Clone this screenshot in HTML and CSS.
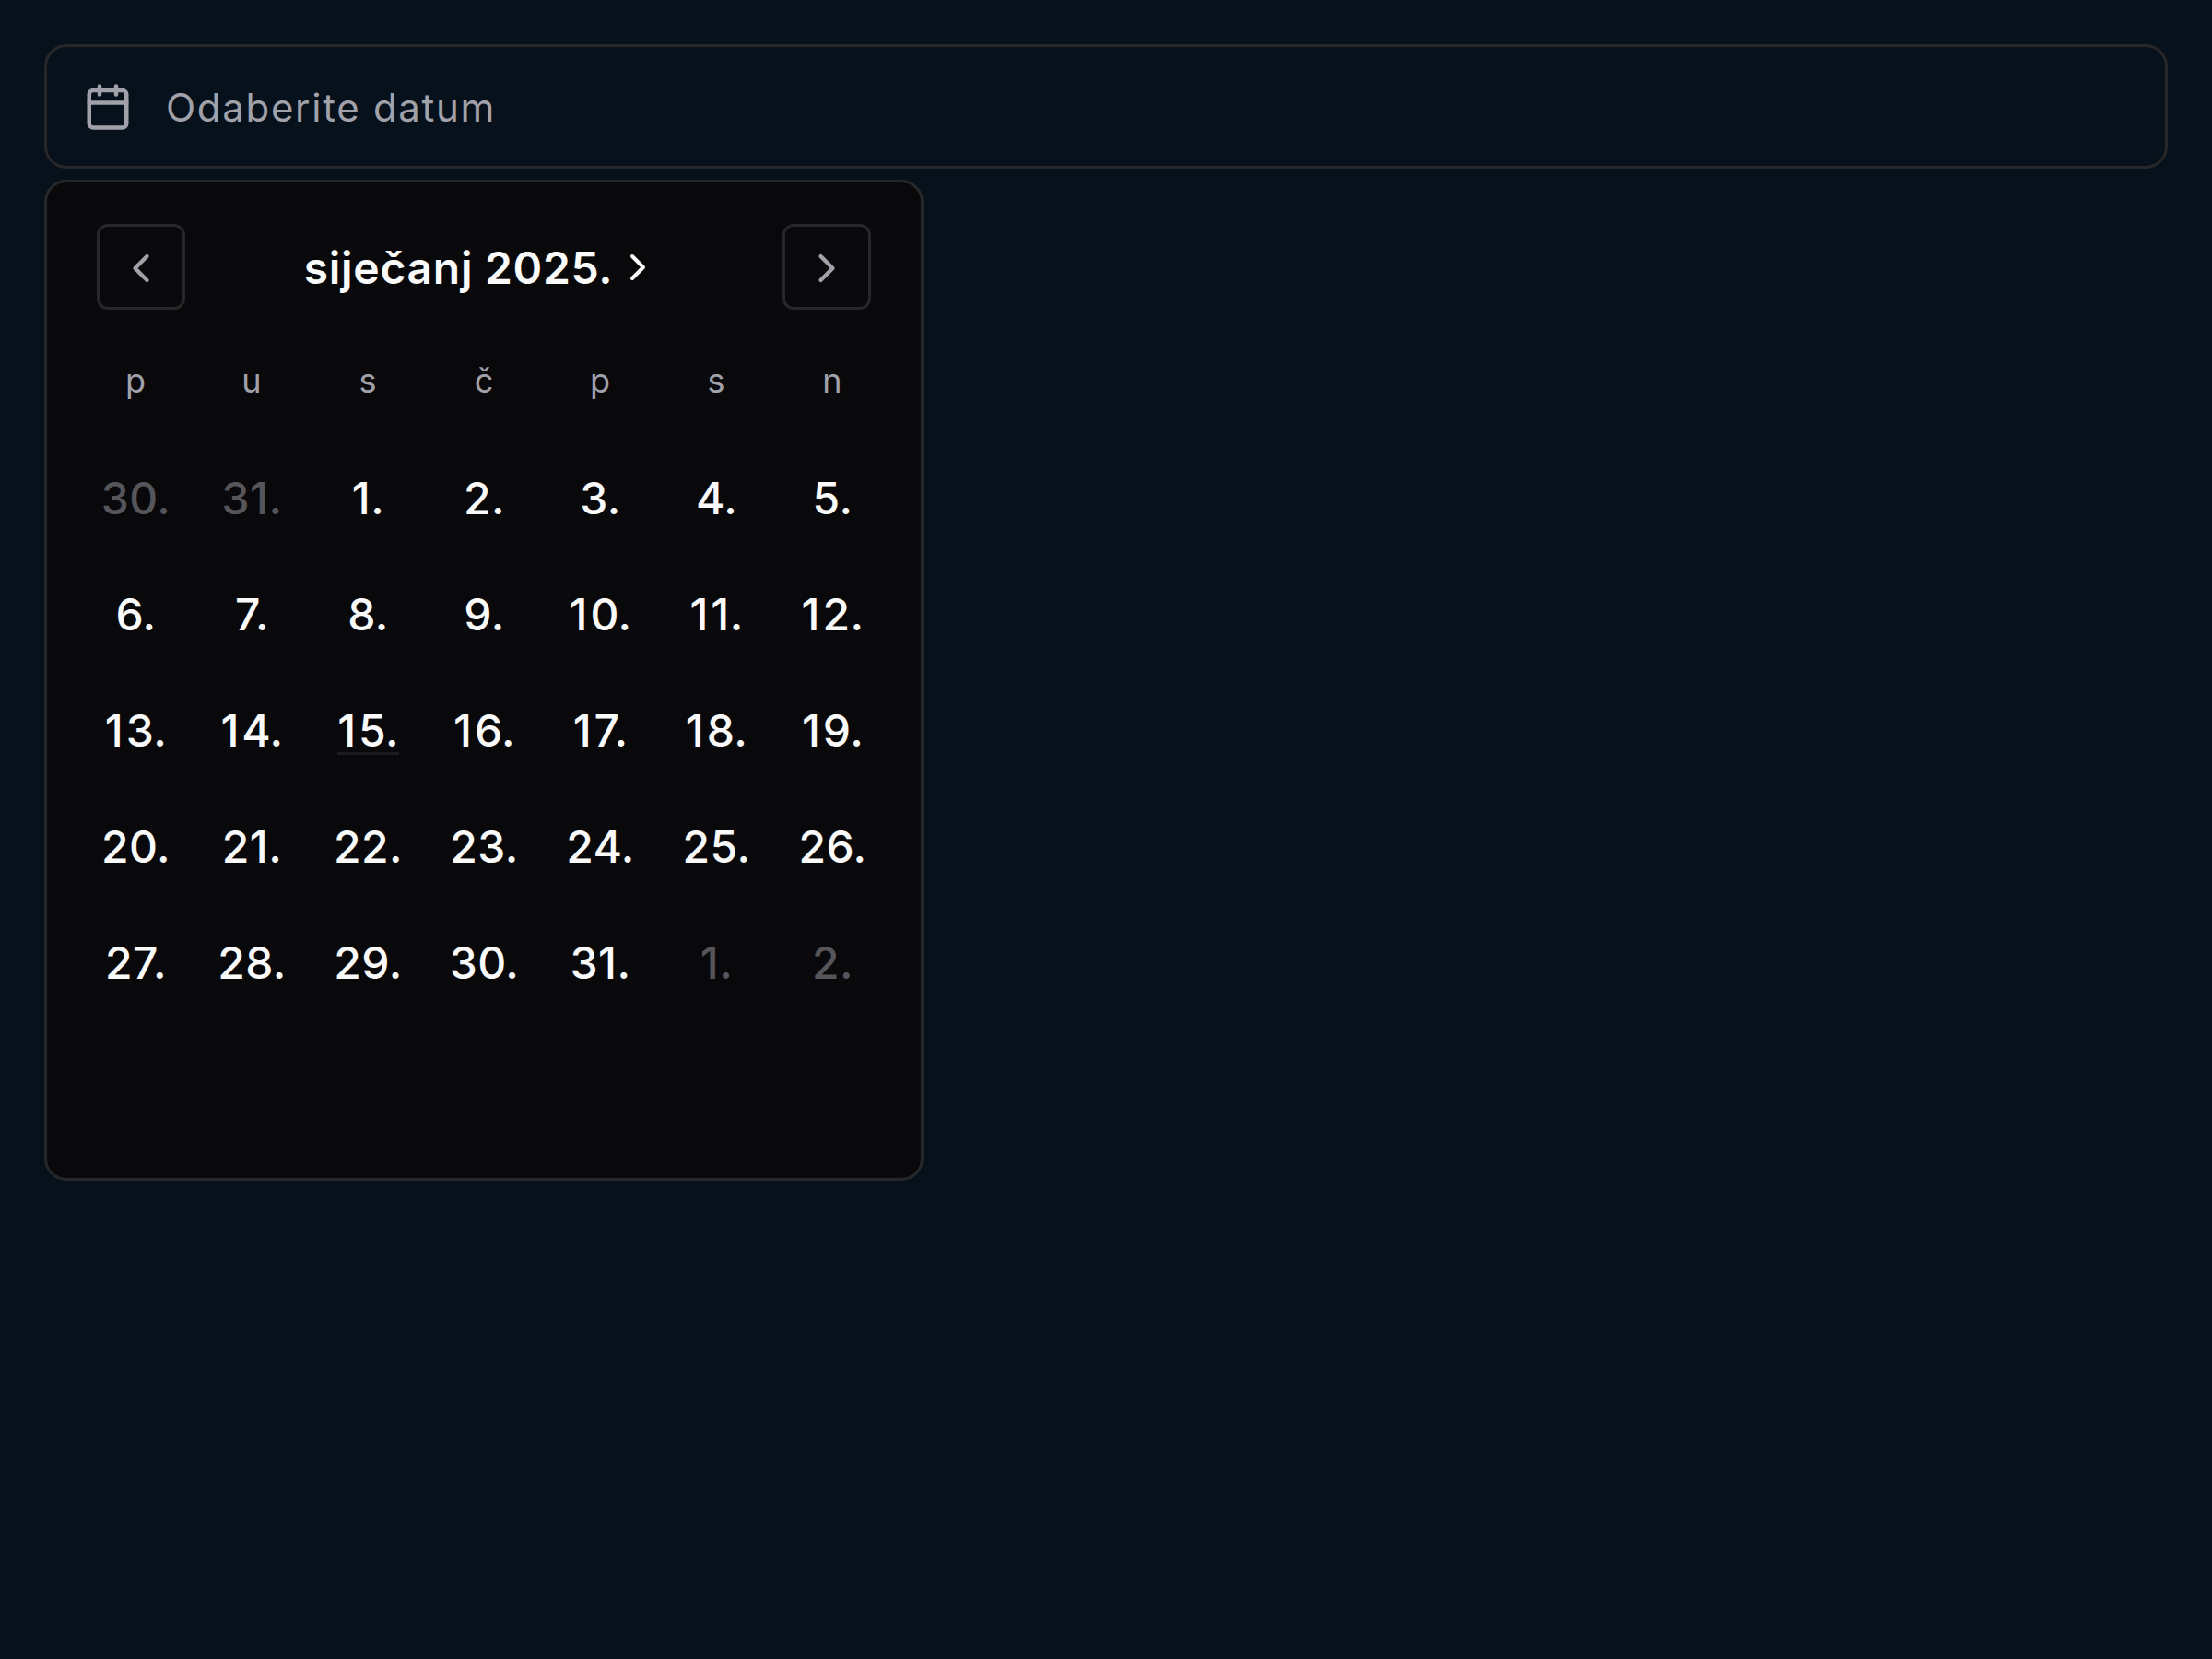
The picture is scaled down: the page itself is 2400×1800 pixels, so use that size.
FILE: index.html
```html
<!DOCTYPE html>
<html lang="hr">
<head>
<meta charset="utf-8">
<title>Odabir datuma</title>
<link rel="stylesheet" href="styles.css">
</head>
<body>
<main class="picker">
  <button class="field" type="button">
    <svg class="field-icon" viewBox="0 0 24 24"><path d="M8 2v4M16 2v4M3 10h18"/><rect x="3" y="4" width="18" height="18" rx="2"/></svg>
    <span class="field-text">Odaberite datum</span>
  </button>
  <section class="panel">
    <header class="header">
      <button class="nav" type="button" aria-label="Prethodni mjesec"><svg class="nav-icon" viewBox="0 0 24 24"><path d="m15 18-6-6 6-6"/></svg></button>
      <button class="title" type="button"><span class="title-text">siječanj 2025.</span><svg class="title-icon" viewBox="0 0 24 24"><path d="m9 18 6-6-6-6"/></svg></button>
      <button class="nav" type="button" aria-label="Sljedeći mjesec"><svg class="nav-icon" viewBox="0 0 24 24"><path d="m9 18 6-6-6-6"/></svg></button>
    </header>
    <div class="weekdays"><span>p</span><span>u</span><span>s</span><span>č</span><span>p</span><span>s</span><span>n</span></div>
    <div class="days">
      <span class="outside">30.</span><span class="outside">31.</span><span>1.</span><span>2.</span><span>3.</span><span>4.</span><span>5.</span>
      <span>6.</span><span>7.</span><span>8.</span><span>9.</span><span class="teen">10.</span><span class="teen">11.</span><span class="teen">12.</span>
      <span class="teen">13.</span><span class="teen">14.</span><span class="teen today">15.</span><span class="teen">16.</span><span class="teen">17.</span><span class="teen">18.</span><span class="teen">19.</span>
      <span>20.</span><span>21.</span><span>22.</span><span>23.</span><span>24.</span><span>25.</span><span>26.</span>
      <span>27.</span><span>28.</span><span>29.</span><span>30.</span><span>31.</span><span class="outside">1.</span><span class="outside">2.</span>
    </div>
  </section>
</main>
</body>
</html>
```
FILE: styles.css
```css
* { box-sizing: border-box; }
body {
  margin: 0;
  min-height: 100vh;
  background: #06111b;
  color: #fafafa;
  font-family: Inter, "Liberation Sans", sans-serif;
}
button {
  margin: 0;
  padding: 0;
  background: none;
  border: 0;
  color: inherit;
  font: inherit;
}
svg {
  flex: none;
  fill: none;
  stroke: currentColor;
  stroke-width: 2;
  stroke-linecap: round;
  stroke-linejoin: round;
}
.picker {
  display: flex;
  flex-direction: column;
  align-items: flex-start;
  gap: 12px;
  padding: 48px;
}
.field {
  display: flex;
  align-items: center;
  gap: 36px;
  width: 100%;
  height: 135px;
  padding: 0 39px;
  border: 3px solid #27272a;
  border-radius: 24px;
  color: #a1a1aa;
  font-size: 42px;
  letter-spacing: 1.7px;
  line-height: 60px;
}
.field-icon { width: 54px; height: 54px; }
.field-text { padding-top: 2px; }
.panel {
  width: 954px;
  height: 1086px;
  padding: 45px 33px;
  border: 3px solid #27272a;
  border-radius: 24px;
  background: #09090b;
}
.header {
  display: flex;
  justify-content: space-between;
  align-items: center;
  height: 93px;
  padding: 0 21px;
}
.nav {
  display: grid;
  place-items: center;
  width: 96px;
  height: 93px;
  padding-top: 3px;
  border: 3px solid #27272a;
  border-radius: 12px;
  color: #a1a1aa;
}
.nav-icon { width: 52px; height: 52px; }
.title {
  display: flex;
  align-items: center;
  gap: 3px;
  padding-right: 4px;
  font-size: 48px;
  font-weight: 600;
  letter-spacing: 0.7px;
  line-height: 72px;
}
.title-text { padding-top: 2px; }
.title-icon { width: 48px; height: 48px; }
.weekdays, .days {
  display: grid;
  grid-template-columns: repeat(7, 126px);
  text-align: center;
}
.weekdays {
  margin-top: 50px;
  color: #a1a1aa;
  font-size: 36px;
  line-height: 54px;
}
.days {
  grid-auto-rows: 126px;
  margin-top: 38px;
  font-size: 48px;
  font-weight: 500;
  letter-spacing: 0.4px;
  line-height: 126px;
}
.days span { padding-left: 1px; }
.outside { color: #55555a; }
.teen::first-letter { letter-spacing: 3px; }
.today {
  text-decoration: underline 3px #1c1a1c;
  text-underline-offset: 6px;
  text-decoration-skip-ink: none;
}
```
